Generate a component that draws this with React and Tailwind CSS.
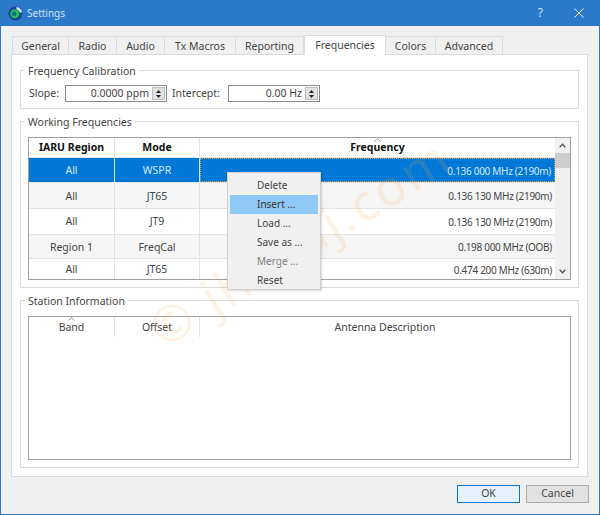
const font = { fontFamily: '"Noto Sans", sans-serif' };

function Logo() {
  return (
    <svg width="15" height="15" viewBox="0 0 15 15">
      <circle cx="7.5" cy="7.5" r="7" fill="#1c3fa0" />
      <circle cx="6.8" cy="7.8" r="4.6" fill="#22c04a" />
      <circle cx="6.2" cy="7.8" r="2.2" fill="#0d6e8c" />
      <path d="M8.5 1a6.5 6.5 0 0 1 5.5 5.5l-2.2 0a4.4 4.4 0 0 0-3.3-3.3z" fill="#cfe6f5" />
    </svg>
  );
}

function Tab({ label, w, active }) {
  return active ? (
    <div className={`${w} h-[20px] pt-[1px] -mt-[2px] -mb-px z-10 bg-white border border-b-0 border-[#dcdcdc] flex items-center justify-center text-[#444]`}>
      {label}
    </div>
  ) : (
    <div className={`${w} h-[18px] pt-[2px] bg-[#f0f0f0] border border-b-0 border-l-0 first:border-l border-[#dcdcdc] flex items-center justify-center text-[#444]`}>
      {label}
    </div>
  );
}

function Spin({ value, w }) {
  return (
    <div className={`${w} h-[17px] bg-white border border-[#8a8a8a] flex items-center`}>
      <span className="flex-1 text-right pr-[3px] text-[#444] leading-none">{value}</span>
      <div className="w-[13px] h-[13px] mr-[1px] bg-[#e1e1e1] border border-[#bdbdbd] flex flex-col items-center justify-center gap-[2px]">
        <svg width="5" height="3" viewBox="0 0 5 3"><path d="M2.5 0L5 3H0z" fill="#222" /></svg>
        <svg width="5" height="3" viewBox="0 0 5 3"><path d="M2.5 3L5 0H0z" fill="#222" /></svg>
      </div>
    </div>
  );
}

function SortMark({ className }) {
  return (
    <svg className={`absolute ${className}`} width="7" height="4" viewBox="0 0 7 4">
      <path d="M0.5 3.5L3.5 0.8L6.5 3.5" fill="none" stroke="#8a8a8a" strokeWidth="0.9" />
    </svg>
  );
}

const rows = [
  ["All", "WSPR", "0.136 000 MHz (2190m)", "h-[26px]"],
  ["All", "JT65", "0.136 130 MHz (2190m)", "h-[26px]"],
  ["All", "JT9", "0.136 130 MHz (2190m)", "h-[26px]"],
  ["Region 1", "FreqCal", "0.198 000 MHz (OOB)", "h-[25px]"],
  ["All", "JT65", "0.474 200 MHz (630m)", "h-[20px]"],
];

function Row({ r, i }) {
  const sel = i === 0;
  const alt = i % 2 === 1;
  const bg = sel ? "bg-[#0078d7] text-[#d4e7f7]" : alt ? "bg-[#f5f5f5] text-[#444]" : "bg-white text-[#444]";
  const cellB = sel ? "border-r border-[#d8e6f3]" : "border-r border-[#e3e3e3]";
  return (
    <div className={`flex ${r[3]} ${bg} ${i < 4 ? "border-b border-[#e3e3e3]" : ""}`}>
      <div className={`w-[86px] pt-[2px] flex items-center justify-center ${cellB}`}>{r[0]}</div>
      <div className={`w-[85px] pt-[2px] flex items-center justify-center ${cellB}`}>{r[1]}</div>
      <div className={`flex-1 pt-[2px] flex items-center justify-end pr-[3px] text-[10px] tracking-[-0.3px] ${sel ? "border border-dotted border-[#e59a4a]" : ""}`}>{r[2]}</div>
    </div>
  );
}

function Scrollbar() {
  return (
    <div className="w-[15px] bg-[#f0f0f0] flex flex-col items-center">
      <div className="h-[15px] flex items-center justify-center">
        <svg width="7" height="5" viewBox="0 0 7 5"><path d="M0.7 4.2L3.5 1.2L6.3 4.2" fill="none" stroke="#555" strokeWidth="1.3" /></svg>
      </div>
      <div className="w-full h-[15px] bg-[#cdcdcd]" />
      <div className="flex-1" />
      <div className="h-[15px] flex items-center justify-center">
        <svg width="7" height="5" viewBox="0 0 7 5"><path d="M0.7 0.8L3.5 3.8L6.3 0.8" fill="none" stroke="#555" strokeWidth="1.3" /></svg>
      </div>
    </div>
  );
}

function Group({ title, className, children }) {
  return (
    <fieldset className={`border border-[#dcdcdc] px-[7px] mx-0 ${className}`}>
      <legend className="-ml-[3px] px-[3px] pt-[2px] leading-[12px] text-[#444]">{title}</legend>
      {children}
    </fieldset>
  );
}

const menu = ["Delete", "Insert ...", "Load ...", "Save as ...", "Merge ...", "Reset"];

export default function App() {
  return (
    <div style={font} className="relative w-[600px] h-[515px] bg-[#f0f0f0] border border-t-0 border-[#2b79c9] text-[10.5px] overflow-hidden">
      <div className="-mx-px h-[26px] bg-[#2b79c9] flex items-center pl-[8px] text-[#cfe0f2]">
        <Logo />
        <span className="ml-[4px] text-[10px]">Settings</span>
        <span className="ml-auto mr-[31px] text-[12px]">?</span>
        <svg className="mr-[16px]" width="10" height="10" viewBox="0 0 10 10">
          <path d="M0.5 0.5L9.5 9.5M9.5 0.5L0.5 9.5" stroke="#e3eef8" strokeWidth="1" />
        </svg>
      </div>

      <div className="pl-[10px] pr-[11px] pt-[10px]">
        <div className="flex items-end h-[18px] pl-[1px]">
          <Tab label="General" w="w-[57px]" />
          <Tab label="Radio" w="w-[48px]" />
          <Tab label="Audio" w="w-[48px]" />
          <Tab label="Tx Macros" w="w-[71px]" />
          <Tab label="Reporting" w="w-[68px]" />
          <Tab label="Frequencies" w="w-[82px]" active />
          <Tab label="Colors" w="w-[50px]" />
          <Tab label="Advanced" w="w-[67px]" />
        </div>

        <div className="relative bg-white border border-[#dcdcdc] h-[423px] px-[8px] pt-[8px]">
          <Group title="Frequency Calibration" className="h-[46px]">
            <div className="flex items-center h-[17px] mt-[8px] pl-[1px] text-[#444]">
              <span className="w-[36px]">Slope:</span>
              <Spin value="0.0000 ppm" w="w-[102px]" />
              <span className="ml-[5px] w-[56px]">Intercept:</span>
              <Spin value="0.00 Hz" w="w-[92px]" />
            </div>
          </Group>

          <Group title="Working Frequencies" className="mt-[5px] h-[174px]">
            <div className="mt-[9px] h-[143px] border border-[#a0a0a0] flex bg-white">
              <div className="flex-1 min-w-0 flex flex-col">
                <div className="relative flex h-[20px] font-bold text-[#111] border-b border-[#e3e3e3] bg-white">
                  <div className="w-[86px] pt-[2px] flex items-center justify-center border-r border-[#e3e3e3]">IARU Region</div>
                  <div className="w-[85px] pt-[2px] flex items-center justify-center border-r border-[#e3e3e3]">Mode</div>
                  <div className="relative flex-1 pt-[2px] flex items-center justify-center">
                    Frequency
                    <SortMark className="top-0 left-1/2 -translate-x-[4px]" />
                  </div>
                </div>
                {rows.map((r, i) => <Row key={i} r={r} i={i} />)}
              </div>
              <Scrollbar />
            </div>
          </Group>

          <Group title="Station Information" className="mt-[5px] h-[175px]">
            <div className="mt-[9px] h-[144px] border border-[#a0a0a0] bg-white">
              <div className="relative flex h-[20px] text-[#444]">
                <div className="relative w-[86px] pt-[1px] flex items-center justify-center border-r border-[#e3e3e3]">
                  Band
                  <SortMark className="top-0 left-1/2 -translate-x-[4px]" />
                </div>
                <div className="w-[85px] pt-[1px] flex items-center justify-center border-r border-[#e3e3e3]">Offset</div>
                <div className="flex-1 pt-[1px] flex items-center justify-center">Antenna Description</div>
              </div>
            </div>
          </Group>
        </div>

        <div className="flex justify-end gap-[6px] mt-[8px] -mr-px">
          <button className="w-[63px] h-[18px] bg-[#e5f1fb] border border-[#0078d7] text-[#444] flex items-center justify-center">OK</button>
          <button className="w-[63px] h-[18px] bg-[#e1e1e1] border border-[#adadad] text-[#444] flex items-center justify-center">Cancel</button>
        </div>
      </div>

      <div className="absolute left-[153px] top-[308px] -rotate-[32deg] origin-left text-[50px] tracking-[3px] leading-none text-[#f6a64a]/15 whitespace-nowrap z-10 pointer-events-none">
        © jh4vaj.com
      </div>

      <div className="absolute left-[226px] top-[172px] w-[94px] h-[118px] text-[10px] bg-[#f0f0f0] border border-[#d0d0d0] shadow-[1px_1px_2px_rgba(0,0,0,0.15)] py-[3px] px-[2px] z-20">
        {menu.map((m, i) => (
          <div key={m} className={`h-[19px] pl-[27px] flex items-center ${i === 1 ? "bg-[#90c8f6] text-[#333]" : i === 4 ? "text-[#808080]" : "text-[#444]"}`}>
            {m}
          </div>
        ))}
      </div>
    </div>
  );
}
